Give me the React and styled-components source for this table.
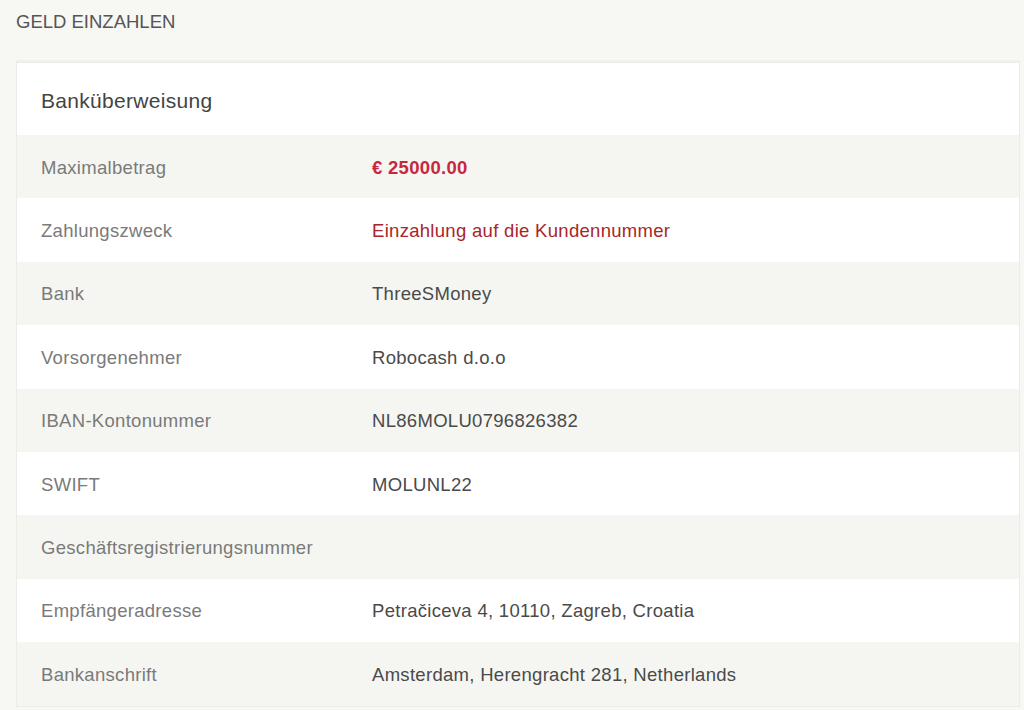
import React from 'react';
import styled, { createGlobalStyle } from 'styled-components';

const GlobalStyle = createGlobalStyle`
  html, body {
    margin: 0;
    padding: 0;
    background: #f7f7f3;
    font-family: "Liberation Sans", Arial, sans-serif;
  }
`;

const Page = styled.div`
  padding: 11px 4px 0 16px;
`;

const PageTitle = styled.h2`
  margin: 0;
  font-size: 18.5px;
  font-weight: normal;
  line-height: 22px;
  color: #555;
  text-transform: uppercase;
`;

const Card = styled.section`
  margin-top: 29px;
  background: #fff;
  border: 1px solid #ecece6;
  box-shadow: 0 -2px 0 #f0f1ec;
`;

const CardHeader = styled.div`
  height: 72px;
  display: flex;
  align-items: center;
  padding: 3px 0 0 24px;
  box-sizing: border-box;
  font-size: 21px;
  letter-spacing: 0.3px;
  color: #444;
`;

const Row = styled.div`
  display: grid;
  grid-template-columns: 331px 1fr;
  align-items: center;
  height: 63.4px;
  padding: 2px 0 0 24px;
  box-sizing: border-box;
  background: ${(p) => (p.$striped ? '#f5f6f1' : '#fff')};
  font-size: 18.5px;
  letter-spacing: 0.3px;
`;

const Label = styled.div`
  color: #7a7a7a;
`;

const Value = styled.div`
  color: ${(p) => p.$color || '#4a4a4a'};
  font-weight: ${(p) => (p.$bold ? 600 : 'normal')};
`;

const rows = [
  { label: 'Maximalbetrag', value: '€ 25000.00', color: '#c8283f', bold: true },
  { label: 'Zahlungszweck', value: 'Einzahlung auf die Kundennummer', color: '#a8262a' },
  { label: 'Bank', value: 'ThreeSMoney' },
  { label: 'Vorsorgenehmer', value: 'Robocash d.o.o' },
  { label: 'IBAN-Kontonummer', value: 'NL86MOLU0796826382' },
  { label: 'SWIFT', value: 'MOLUNL22' },
  { label: 'Geschäftsregistrierungsnummer', value: '' },
  { label: 'Empfängeradresse', value: 'Petračiceva 4, 10110, Zagreb, Croatia' },
  { label: 'Bankanschrift', value: 'Amsterdam, Herengracht 281, Netherlands' },
];

export default function App() {
  return (
    <Page>
      <GlobalStyle />
      <PageTitle>Geld einzahlen</PageTitle>
      <Card>
        <CardHeader>Banküberweisung</CardHeader>
        {rows.map((r, i) => (
          <Row key={r.label} $striped={i % 2 === 0}>
            <Label>{r.label}</Label>
            <Value $color={r.color} $bold={r.bold}>{r.value}</Value>
          </Row>
        ))}
      </Card>
    </Page>
  );
}
